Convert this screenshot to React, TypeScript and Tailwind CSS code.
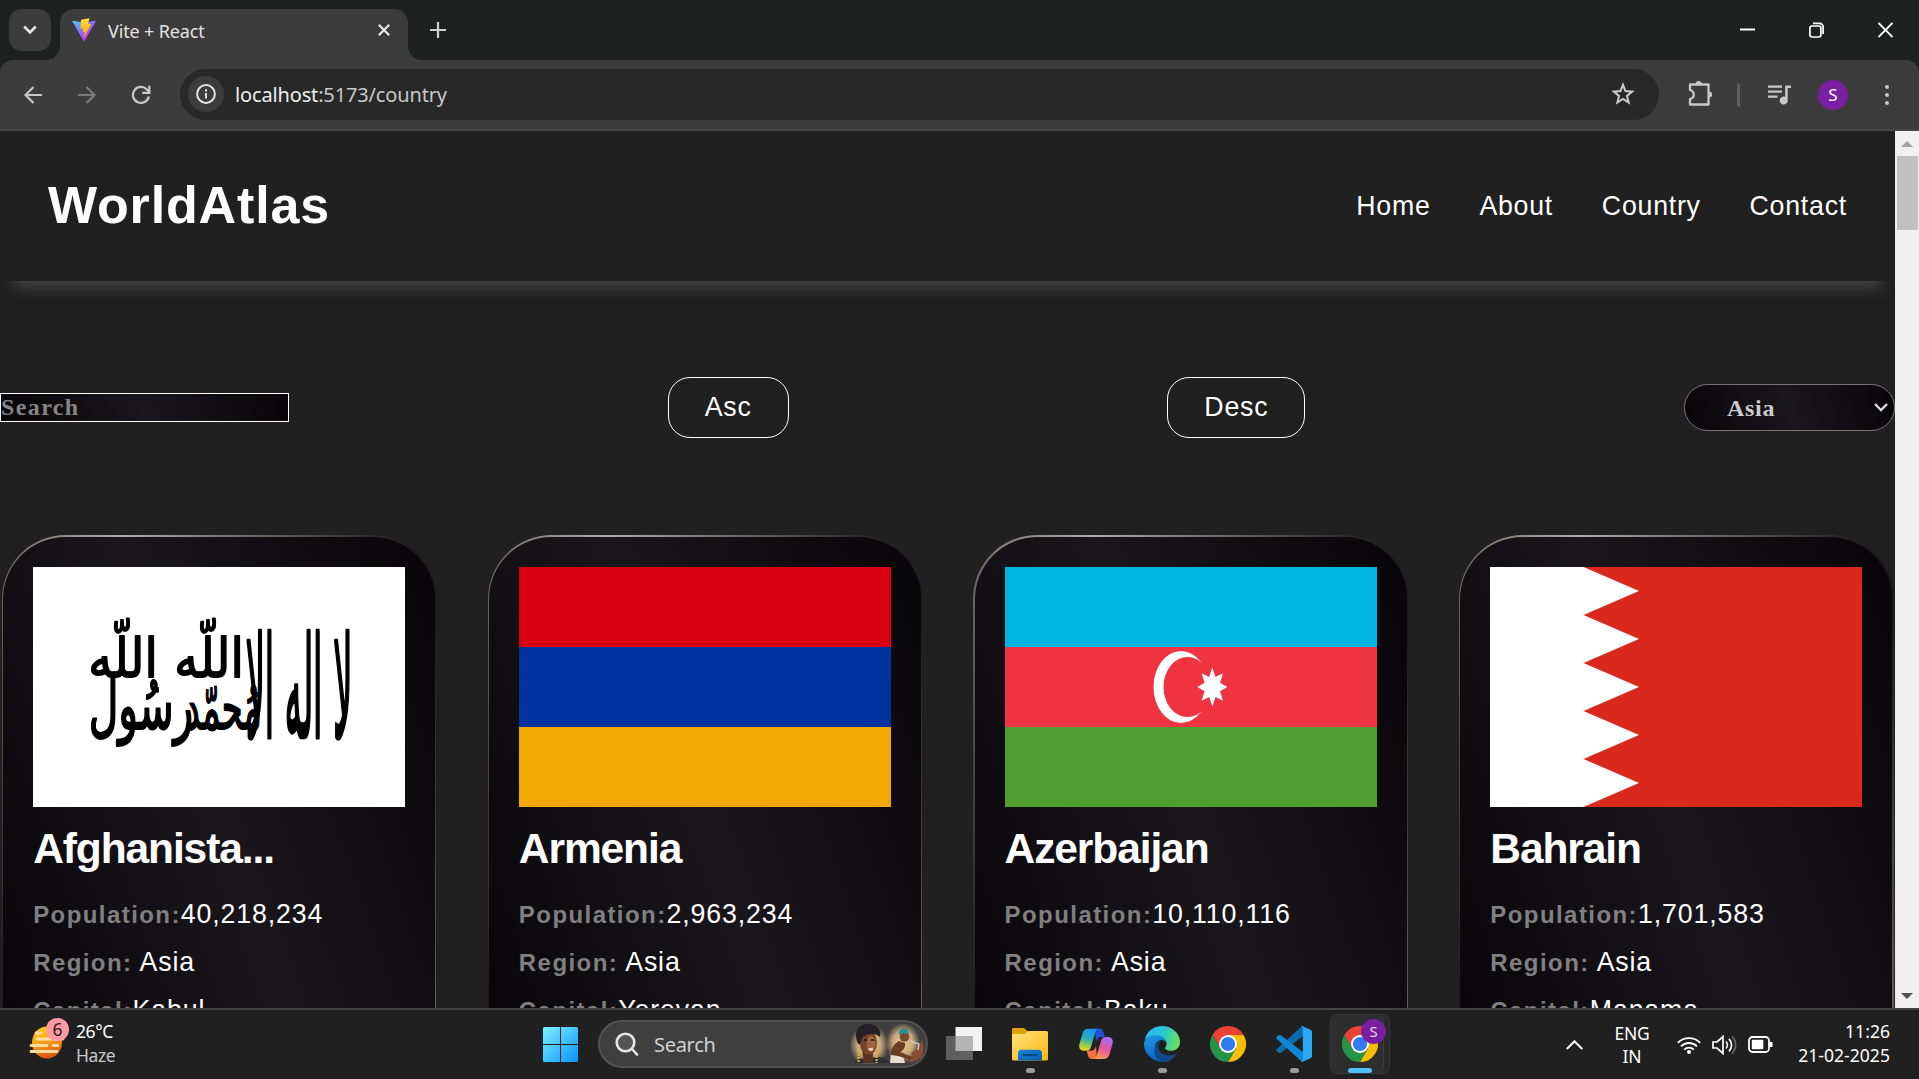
import React from 'react';

const ui = "font-['Noto_Sans','Open_Sans',sans-serif]";

/* ---------- Browser chrome ---------- */

function ViteLogo() {
  return (
    <svg viewBox="0 0 410 404" className="h-6 w-6">
      <defs>
        <linearGradient id="vite-a" x1="6" y1="33" x2="235" y2="344" gradientUnits="userSpaceOnUse">
          <stop stopColor="#41D1FF" />
          <stop offset="1" stopColor="#BD34FE" />
        </linearGradient>
        <linearGradient id="vite-b" x1="194" y1="8" x2="236" y2="292" gradientUnits="userSpaceOnUse">
          <stop stopColor="#FFEA83" />
          <stop offset=".083" stopColor="#FFDD35" />
          <stop offset="1" stopColor="#FFA800" />
        </linearGradient>
      </defs>
      <path fill="url(#vite-a)" d="M399.6 59.5 215.6 388.5c-3.8 6.8-13.5 6.8-17.4.1L10.6 59.6C6.400 52.200 12.800 43.300 21.100 44.800l184.200 32.900c1.200.2 2.400.2 3.500 0l180.300-32.900c8.300-1.500 14.700 7.300 10.500 14.700Z" />
      <path fill="url(#vite-b)" d="M293 1.600 156.800 28.300c-2.200.4-3.900 2.300-4 4.600l-8.400 141.400c-.2 3.300 2.900 5.900 6.100 5.200l37.900-8.800c3.500-.8 6.700 2.300 6 5.900l-11.300 55.200c-.8 3.700 2.700 6.900 6.300 5.800l23.400-7.100c3.600-1.100 7.100 2.100 6.300 5.800l-17.900 86.600c-1.100 5.400 6.100 8.400 9.100 3.700l2-3.100 110.900-221.400c1.900-3.700-1.300-7.900-5.400-7.100l-39 7.500c-3.700.7-6.800-2.700-5.700-6.300L298.700 7.900c1-3.600-2.100-7.100-5.700-6.300Z" />
    </svg>
  );
}

function TabStrip() {
  return (
    <div className="flex h-[60px] items-end bg-[#1f2120]">
      <div className="mb-[9px] ml-[9px] flex h-[42px] w-[42px] items-center justify-center rounded-[13px] bg-[#3c3c3c]">
        <svg viewBox="0 0 14 10" className="h-[10px] w-[14px]" fill="none" stroke="#e3e3e3" strokeWidth="2.6">
          <path d="M1.200 1.500 7 7.300l5.800-5.800" />
        </svg>
      </div>
      <div className="relative ml-[9px] flex h-[51px] w-[348px] items-center rounded-t-[14px] bg-[#3c3c3c] pl-3 pb-[9px]">
        <svg className="absolute bottom-0 -left-[14px] h-[14px] w-[14px]" viewBox="0 0 14 14">
          <path d="M14 0v14H0A14 14 0 0 0 14 0Z" fill="#3c3c3c" />
        </svg>
        <svg className="absolute bottom-0 -right-[14px] h-[14px] w-[14px]" viewBox="0 0 14 14">
          <path d="M0 0v14h14A14 14 0 0 1 0 0Z" fill="#3c3c3c" />
        </svg>
        <ViteLogo />
        <span className="ml-3 mt-px w-[270px] text-[18px] leading-6 tracking-[-0.150px] text-[#e3e3e3]">Vite + React</span>
        <svg viewBox="0 0 12 12" className="h-3 w-3" stroke="#e8e8e8" strokeWidth="2.200">
          <path d="m.8.8 10.400 10.400M11.200.8.8 11.200" />
        </svg>
      </div>
      <svg viewBox="0 0 16 16" className="mb-[22px] ml-[22px] h-4 w-4" stroke="#d0d0d0" strokeWidth="2.200">
        <path d="M8 0v16M0 8h16" />
      </svg>
      <div className="mb-[22px] ml-auto mr-[26px] flex items-center gap-[54px]">
        <svg viewBox="0 0 15 16" className="h-4 w-[15px]" stroke="#fff" strokeWidth="2">
          <path d="M0 7.500h15" />
        </svg>
        <svg viewBox="0 0 15 16" className="h-4 w-[15px]" fill="none" stroke="#fff" strokeWidth="1.700">
          <rect x=".9" y="4" width="11" height="11" rx="2.200" />
          <path d="M4 1.300h6.500a3.600 3.600 0 0 1 3.600 3.600V12" />
        </svg>
        <svg viewBox="0 0 15 16" className="h-4 w-[15px]" stroke="#fff" strokeWidth="1.800">
          <path d="m.5 1 14 14M14.500 1l-14 14" />
        </svg>
      </div>
    </div>
  );
}

function Toolbar() {
  return (
    <div className="bg-[#1f2120]">
      <div className="flex h-[71px] items-center rounded-t-[13px] border-b-2 border-[#474747] bg-[#3c3c3c] pl-6">
        <svg viewBox="0 0 18 18" className="h-[18px] w-[18px]" fill="none" stroke="#c7c7c7" strokeWidth="2.200">
          <path d="M18 9H2M9.500 1 1.500 9l8 8" />
        </svg>
        <svg viewBox="0 0 18 18" className="ml-9 h-[18px] w-[18px]" fill="none" stroke="#7c7c7c" strokeWidth="2.200">
          <path d="M0 9h16M8.500 1l8 8-8 8" />
        </svg>
        <svg viewBox="0 0 20 20" className="ml-[35px] h-5 w-5" fill="none" stroke="#c7c7c7" strokeWidth="2.300">
          <path d="M17.800 11.500A8 8 0 1 1 15.800 4.500L18 6.800" />
          <path d="M18.300 0.800v7.100h-7.100" />
        </svg>
        <div className="-mt-px ml-[29px] flex h-[51px] w-[1479px] items-center rounded-full bg-[#282828] pl-2">
          <div className="flex h-9 w-9 items-center justify-center rounded-full bg-[#3c3c3c]">
            <svg viewBox="0 0 20 20" className="h-5 w-5" fill="none" stroke="#e3e3e3" strokeWidth="2">
              <circle cx="10" cy="10" r="8.900" />
              <path d="M10 9v5.500M10 5.200v2.200" />
            </svg>
          </div>
          <span className="ml-[11px] mt-px text-[20px] leading-7 tracking-[-0.150px] text-[#c7c7c7]">
            <span className="text-[#eeeeee]">localhost</span>:5173/country
          </span>
          <svg viewBox="0 0 24 24" className="ml-auto mr-6 h-6 w-6" fill="none" stroke="#c7c7c7" strokeWidth="2.100">
            <path d="m12 2.900 2.500 6.200 6.600.5-5.100 4.300 1.600 6.500L12 16.900l-5.600 3.500L8 13.900 2.900 9.600l6.600-.5Z" />
          </svg>
        </div>
        <svg viewBox="0 0 26 26" className="ml-[28px] -mt-1 h-[26px] w-[26px]" fill="none" stroke="#c7c7c7" strokeWidth="2.300" strokeLinejoin="round">
          <path d="M3 4.500h18.500V24.500H3v-5.500c5-1.200 5-7.800 0-9Z" />
          <path d="M8.800 4.200a2.900 3.200 0 0 1 5.800 0ZM22 11.500a3.200 2.900 0 0 1 0 5.800Z" fill="#c7c7c7" stroke="none" />
        </svg>
        <div className="ml-6 h-6 w-[3px] rounded bg-[#5f5f5f]" />
        <svg viewBox="0 0 24 20" className="ml-[28px] h-5 w-6" fill="#c7c7c7">
          <path d="M0 .5h14v2.300H0zM0 5.500h14v2.300H0zM0 10.500h9.500v2.300H0zM17.200.5H23v2.600h-3.300v12.400a4 4 0 1 1-2.500-3.700Z" />
        </svg>
        <div className="ml-[26px] flex h-[30px] w-[30px] items-center justify-center rounded-full bg-[#7b1fa2] text-[17px] leading-none text-white">S</div>
        <div className="ml-[37px] flex flex-col gap-1">
          <div className="h-1 w-1 rounded-full bg-[#c7c7c7]" />
          <div className="h-1 w-1 rounded-full bg-[#c7c7c7]" />
          <div className="h-1 w-1 rounded-full bg-[#c7c7c7]" />
        </div>
      </div>
    </div>
  );
}

function Scrollbar() {
  return (
    <div className="flex w-6 shrink-0 flex-col items-center bg-[#f0f0f0]">
      <svg viewBox="0 0 12 6" className="mt-[10px] h-[6px] w-3" fill="#a3a3a3">
        <path d="m6 0 6 6H0Z" />
      </svg>
      <div className="mt-[9px] h-[74px] w-[21px] bg-[#c1c1c1]" />
      <svg viewBox="0 0 12 6" className="mb-[9px] mt-auto h-[6px] w-3" fill="#505050">
        <path d="M0 0h12L6 6Z" />
      </svg>
    </div>
  );
}

/* ---------- Flags ---------- */

function AfghanistanFlag() {
  return (
    <svg viewBox="0 0 372 240" className="h-[240px] w-[372px] bg-white" direction="rtl" fontFamily="'DejaVu Sans', sans-serif" fill="#000">
      <g fontSize="40" textAnchor="middle" stroke="#000" strokeWidth="1.300" strokeLinejoin="round">
        <text transform="translate(266 170) scale(.84 3.500)">لا اله الا</text>
        <text transform="translate(176 110) scale(1.200 1.350)">اللّه</text>
        <text transform="translate(90 110) scale(1.200 1.350)">اللّه</text>
        <text transform="translate(190 162) scale(.84 1.550)">مُحمّد</text>
        <text transform="translate(108 162) scale(1.020 1.700)">رسُول</text>
      </g>
    </svg>
  );
}

function ArmeniaFlag() {
  return (
    <div className="grid h-[240px] w-[372px] grid-rows-3">
      <div className="bg-[#d90012]" />
      <div className="bg-[#0033a0]" />
      <div className="bg-[#f2a800]" />
    </div>
  );
}

function AzerbaijanFlag() {
  const star = Array.from({ length: 16 }, (_, i) => {
    const r = i % 2 === 0 ? 1 : 0.56;
    const a = (i * Math.PI) / 8;
    return `${207.300 + 15 * r * Math.sin(a)},${120 - 19.500 * r * Math.cos(a)}`;
  }).join(' ');
  return (
    <svg viewBox="0 0 372 240" preserveAspectRatio="none" className="h-[240px] w-[372px]">
      <path fill="#00b5e2" d="M0 0h372v80H0z" />
      <path fill="#ef3340" d="M0 80h372v80H0z" />
      <path fill="#509e2f" d="M0 160h372v80H0z" />
      <ellipse cx="176" cy="120" rx="27.500" ry="36" fill="#fff" />
      <ellipse cx="182.500" cy="120" rx="24" ry="30" fill="#ef3340" />
      <polygon points={star} fill="#fff" />
    </svg>
  );
}

function BahrainFlag() {
  return (
    <svg viewBox="0 0 372 240" className="h-[240px] w-[372px]">
      <path fill="#da291c" d="M0 0h372v240H0z" />
      <path fill="#fff" d="M0 0h93.500l55.500 24-55.500 24 55.500 24-55.500 24 55.500 24-55.500 24 55.500 24-55.500 24 55.500 24-55.500 24H0z" />
    </svg>
  );
}

/* ---------- Page ---------- */

const countries = [
  { name: 'Afghanista...', population: '40,218,234', capital: 'Kabul', Flag: AfghanistanFlag },
  { name: 'Armenia', population: '2,963,234', capital: 'Yerevan', Flag: ArmeniaFlag },
  { name: 'Azerbaijan', population: '10,110,116', capital: 'Baku', Flag: AzerbaijanFlag },
  { name: 'Bahrain', population: '1,701,583', capital: 'Manama', Flag: BahrainFlag },
];

function Label({ children }: { children: React.ReactNode }) {
  return <span className="text-[24px] font-bold tracking-[1.430px] text-[#808080]">{children}</span>;
}

function Card({ name, population, capital, Flag }: (typeof countries)[number]) {
  return (
    <li className="h-[562px] rounded-[64px] bg-[linear-gradient(71deg,#0c0d0d,#b0aca5,#0c0d0d)] px-[1.250px] py-[2px]">
      <div className="h-full rounded-[62.500px] bg-[linear-gradient(71deg,#080509,#1a171c,#080509)] px-[30px] pt-[30px]">
        <Flag />
        <h2 className="mt-[18px] whitespace-nowrap text-[42.500px] font-bold leading-[48px] tracking-[-1.100px] text-white">{name}</h2>
        <div className="mt-[17px] whitespace-nowrap text-[26.750px] leading-[48px] tracking-[0.850px] text-white">
          <p className="h-12"><Label>Population:</Label>{population}</p>
          <p className="h-12"><Label>Region:</Label><span className="ml-[7px]">Asia</span></p>
          <p className="h-12"><Label>Capital:</Label>{capital}</p>
        </div>
      </div>
    </li>
  );
}

function Page() {
  return (
    <div className="flex h-[877px] overflow-hidden">
      <main className="flex-1 overflow-hidden bg-[#202020] font-['Liberation_Sans',Arial,sans-serif]">
        <header className="flex h-[150px] items-center justify-between bg-[#202020] px-12 shadow-[0_20px_14px_-14px_#474747]">
          <h1 className="-mt-[3px] text-[52px] font-bold leading-[60px] tracking-[0.850px] text-white">WorldAtlas</h1>
          <nav className="flex gap-[48.800px] text-[26.750px] tracking-[0.750px] text-white">
            <a>Home</a>
            <a>About</a>
            <a>Country</a>
            <a>Contact</a>
          </nav>
        </header>
        <section className="mt-24 flex h-[61px] items-center justify-between">
          <div className="h-[29px] w-[289px] border border-white bg-[linear-gradient(71deg,#080509,#1a171c,#080509)] font-['Liberation_Serif',serif] text-[24px] font-bold leading-[27px] tracking-[1.400px] text-[#858585]">Search</div>
          <button className="h-[61px] w-[121px] rounded-[22px] border border-white text-[26.750px] tracking-[0.750px] text-white">Asc</button>
          <button className="h-[61px] w-[138px] rounded-[22px] border border-white text-[26.750px] tracking-[0.750px] text-white">Desc</button>
          <div className="flex h-[47px] w-[211px] items-center justify-between rounded-full border border-[#767676] bg-[linear-gradient(71deg,#080509,#1a171c,#080509)] pl-[42px] pr-[6px] font-['Liberation_Serif',serif] text-[24px] font-bold tracking-[0.700px] text-[#cccccc]">
            Asia
            <svg viewBox="0 0 14 9" className="h-[9px] w-[14px]" fill="none" stroke="#e0e0e0" strokeWidth="2.300">
              <path d="m1 1 6 6 6-6" />
            </svg>
          </div>
        </section>
        <ul className="mt-[97px] grid grid-cols-4 gap-[51.300px] pl-[1.900px] pr-[1.500px]">
          {countries.map((c) => <Card key={c.name} {...c} />)}
        </ul>
      </main>
      <Scrollbar />
    </div>
  );
}

/* ---------- Taskbar ---------- */

function WeatherIcon() {
  return (
    <svg viewBox="0 0 44 42" className="h-[42px] w-11">
      <defs>
        <linearGradient id="sun" x1="0" y1="0" x2=".3" y2="1">
          <stop stopColor="#ffd21c" />
          <stop offset=".5" stopColor="#fba71b" />
          <stop offset="1" stopColor="#e05a10" />
        </linearGradient>
      </defs>
      <ellipse cx="19" cy="24.500" rx="15" ry="16" fill="url(#sun)" />
      <g stroke="#f8dfa0" strokeWidth="2.800" strokeLinecap="round">
        <path d="M8 15h5M9 21h18M32 21h3M3 27.500h16M25 27.500h5M3 33.500h26" />
      </g>
      <circle cx="29.500" cy="11.500" r="11.500" fill="#ff99a4" />
      <text x="29.500" y="17.500" textAnchor="middle" fontSize="17.500" fill="#1a1a1a">6</text>
    </svg>
  );
}

function ChromeIcon() {
  return (
    <svg viewBox="0 0 36 36" className="h-9 w-9">
      <path fill="#fbbc05" d="M18 9h15.600A18 18 0 0 1 18 36l7.800-13.500Z" />
      <path fill="#ea4335" d="M2.400 9 10.200 22.500 18 9h15.600A18 18 0 0 0 2.400 9Z" />
      <path fill="#249447" d="M2.400 9A18 18 0 0 0 18 36l7.800-13.500-7.800 4-7.800-4Z" />
      <circle cx="18" cy="18" r="9" fill="#fff" />
      <circle cx="18" cy="18" r="7.100" fill="#2f7cf0" />
    </svg>
  );
}

function EdgeIcon() {
  return (
    <svg viewBox="0 0 36 36" className="h-9 w-9">
      <defs>
        <linearGradient id="edge-a" x1="0" y1=".3" x2="1" y2=".5">
          <stop stopColor="#30b4f4" />
          <stop offset=".5" stopColor="#27c6d4" />
          <stop offset="1" stopColor="#6be35a" />
        </linearGradient>
        <linearGradient id="edge-b" x1="0" y1="0" x2=".4" y2="1">
          <stop stopColor="#1e9de8" />
          <stop offset="1" stopColor="#0a62c0" />
        </linearGradient>
      </defs>
      <path fill="url(#edge-a)" d="M.6 14C2.500 5.500 9.500 0 18 0c10.500 0 18 7.800 18 16 0 5.400-4 8.800-9 8.800-4.200 0-6-1.600-6-2.700 0-1 1.600-1.600 1.600-4.200 0-4.500-5-8-10.600-8C7 9.900 2.500 12 .6 14Z" />
      <path fill="url(#edge-b)" d="M0 18c0-4.800 5-8.800 11-8.800 6.400 0 11.400 3.800 11.600 8.200-1-2.200-3-3.300-5-3.300-4 0-6.800 4-6.800 8.400 0 6.500 4.700 11.700 10.700 13.200C10 37 0 28.500 0 18Z" />
      <path fill="#114a8b" d="M14.200 19.500c-.6 5.500 4.300 9.800 10.400 9.800 3.500 0 6-1 8.300-2.400C30 32.500 25 36 19 36 13 35 9.500 29 10.800 22.500c.5-3.500 3-7 6.500-8.200-1.600 1-2.900 3-3.100 5.200Z" />
    </svg>
  );
}

function VSCodeIcon() {
  return (
    <svg viewBox="0 0 36 36" className="h-9 w-9">
      <path fill="#0b6cb0" d="M.8 25.200a1.500 1.500 0 0 1 0-2.200L25.600.5c.5-.4.8-.5 1.400-.3v9.700L4.800 26.700a1.600 1.600 0 0 1-2 0Z" />
      <path fill="#0f86d2" d="M.8 10.800a1.500 1.500 0 0 0 0 2.200l24.800 22.500c.5.4.8.5 1.400.3v-9.700L4.800 9.300a1.600 1.600 0 0 0-2 0Z" />
      <path fill="#2aa8f4" d="M26.800.2 34.800 4c.8.4 1.200 1 1.200 1.900v24.200c0 .9-.4 1.500-1.200 1.900l-8 3.800c-.9.4-1.500.2-2.200-.5.900.6 2.200.1 2.200-1V1.700c0-1.100-1.300-1.600-2.200-1C25.300 0 25.900-.2 26.800.2Z" />
    </svg>
  );
}

function CopilotIcon() {
  return (
    <svg viewBox="0 0 34 32" className="h-8 w-[34px]">
      <defs>
        <linearGradient id="cop-a" x1=".5" y1="0" x2=".3" y2="1">
          <stop stopColor="#1597f0" />
          <stop offset=".45" stopColor="#25b0b8" />
          <stop offset=".75" stopColor="#8fcf4c" />
          <stop offset="1" stopColor="#f3d21b" />
        </linearGradient>
        <linearGradient id="cop-b" x1=".7" y1="0" x2=".3" y2="1">
          <stop stopColor="#a06cf5" />
          <stop offset=".5" stopColor="#e3559f" />
          <stop offset="1" stopColor="#ff9a55" />
        </linearGradient>
      </defs>
      <path fill="#1c52d4" d="M16 .8h4.500c2.500 0 3.500 1.500 4.200 4l1.200 4.200H22c-3 0-4 2-5 5Z" />
      <path fill="#f5703f" d="M18 31h-5c-2.500 0-3.600-1.500-4.200-4l-1-4.200H12c3 0 4-2 5-5Z" />
      <path fill="url(#cop-a)" d="M9.500.8H20c-2 0-3 1.200-3.700 3.500L12 18.800c-.9 3-2 4-4.500 4H5c-4 0-5.600-2.800-4.500-7L3.500 5.500C4.400 2.300 6 .8 9.500.8Z" />
      <path fill="url(#cop-b)" d="M24.500 31H14c2 0 3-1.200 3.700-3.500L22 13c.9-3 2-4 4.500-4H29c4 0 5.600 2.800 4.500 7l-3 10.300c-.9 3.200-2.500 4.700-6 4.700Z" />
    </svg>
  );
}

function FolderIcon() {
  return (
    <svg viewBox="0 0 36 36" className="h-9 w-9">
      <defs>
        <linearGradient id="fold" x1="0" y1="0" x2="1" y2="1">
          <stop stopColor="#ffe07a" />
          <stop offset="1" stopColor="#fbb914" />
        </linearGradient>
        <linearGradient id="fold-blue" x1="0" y1="0" x2="1" y2="1">
          <stop stopColor="#1483d8" />
          <stop offset="1" stopColor="#0c5fae" />
        </linearGradient>
      </defs>
      <path fill="#e0a100" d="M0 3.500C0 2.600.6 2 1.500 2H11c.8 0 1.300.3 1.900.8L16 5.500V10H0Z" />
      <path fill="url(#fold)" d="M0 8h11.500c.8 0 1.300-.2 1.900-.7l1.700-1.500c.5-.5 1-.7 1.800-.7h17.600c.9 0 1.500.6 1.500 1.500V33c0 .9-.6 1.500-1.500 1.500h-33C.6 34.500 0 33.900 0 33Z" />
      <path fill="url(#fold-blue)" d="M6 34.500V27c0-2 1.300-3.300 3.300-3.300h17.400c2 0 3.300 1.300 3.300 3.300v7.500Z" />
      <path stroke="#0a4a86" strokeWidth="1.800" strokeLinecap="round" d="M11.500 29h13" />
    </svg>
  );
}

function SearchArt() {
  return (
    <svg viewBox="0 0 76 40" className="h-10 w-[76px]">
      <defs>
        <radialGradient id="glow">
          <stop stopColor="#f2cf96" />
          <stop offset=".6" stopColor="#c9a878" />
          <stop offset="1" stopColor="#c9a878" stopOpacity="0" />
        </radialGradient>
      </defs>
      <ellipse cx="20" cy="21" rx="19.500" ry="21" fill="url(#glow)" />
      <ellipse cx="54" cy="19" rx="17" ry="20" fill="url(#glow)" />
      <path fill="#2c2e38" d="M5 39c2-5 8-4 13-5l10-1c5 0 9 1 13 6Z" />
      <path fill="#5a3221" d="M13 26h11v13H15Z" />
      <ellipse cx="19.500" cy="19" rx="8.500" ry="12" fill="#74432b" />
      <ellipse cx="22" cy="20" rx="4.500" ry="8" fill="#a3653f" />
      <path fill="#262126" d="M7.500 15C5 5 11 0 19 0s14 5 12 13c-4-4-13-4-18 1l-2 7c-2-1-3.500-3-3.500-6Z" />
      <path d="M15 16h3.500M22 16h3.500" stroke="#1f1412" strokeWidth="1.400" />
      <path d="M19 25c2-1.500 4-1.500 5.500 0-1 2-4.500 2-5.500 0Z" fill="#f1dcd4" />
      <path d="M9.500 27v12M27.500 26v13" stroke="#d7ae2e" strokeWidth="2.200" strokeDasharray="2 1" />
      <path fill="#e8ddcd" d="M42 27c5-2 9 0 12 5l2 7H41Z" />
      <path fill="#6b3d26" d="M42 31c-1-6 3-11 8-14l6 2c1 4-2 8-5 9l12 5-1 3-13-4Z" />
      <circle cx="55.500" cy="13" r="4.800" fill="#7d4a2f" />
      <path fill="#1f8f9c" d="M50 10c0-5 4-6 8-5l2 5c-4-1.500-7-1-9 1Z" />
      <path fill="#8a4f32" d="M62 29 69 24l4-8 2 7-2 10-9 5h-5l5-6Z" />
      <path d="m61 17 9 3-1 6" stroke="#c8cbd0" strokeWidth="1.400" fill="none" />
    </svg>
  );
}

function TaskItem({ children, dot = false }: { children: React.ReactNode; dot?: boolean }) {
  return (
    <div className="relative flex h-[71px] w-[66px] items-center justify-center pb-px">
      {children}
      {dot && <div className="absolute bottom-[7px] h-[5px] w-[9px] rounded-full bg-[#9a9a9a]" />}
    </div>
  );
}

function Taskbar() {
  return (
    <footer className="flex h-[71px] items-center border-t-2 border-[#444444] bg-[#202020]">
      <div className="flex w-[543px] items-center pl-[28px]">
        <div className="-mt-[12px]"><WeatherIcon /></div>
        <div className="-mt-[3px] ml-1 text-[17.500px] leading-6 tracking-[-0.4px]">
          <div className="text-white">26°C</div>
          <div className="text-[#c8c8c8]">Haze</div>
        </div>
      </div>
      <svg viewBox="0 0 35 35" className="h-[35px] w-[35px]">
        <defs>
          <linearGradient id="win" x1="0" y1="0" x2="35" y2="35" gradientUnits="userSpaceOnUse">
            <stop stopColor="#7df0ff" />
            <stop offset="1" stopColor="#0a94fb" />
          </linearGradient>
        </defs>
        <path fill="url(#win)" d="M1.500 0H17v17H0V1.500Q0 0 1.500 0ZM18 0h15.500Q35 0 35 1.500V17H18ZM0 18h17v17H1.500Q0 35 0 33.500ZM18 18h17v15.500Q35 35 33.500 35H18Z" />
      </svg>
      <div className="-mt-px ml-5 flex h-12 w-[330px] items-center rounded-full border-2 border-[#525252] bg-[#3f3f3f] pl-[15px] pr-px">
        <svg viewBox="0 0 24 24" className="h-6 w-6" fill="none" stroke="#e4e4e4" strokeWidth="2.600" strokeLinecap="round">
          <circle cx="10.500" cy="10.500" r="8.800" fill="#555" />
          <path d="m17 17 5 5.500" />
        </svg>
        <span className="ml-[15px] mt-px text-[20px] leading-7 tracking-[-0.3px] text-[#d0d0d0]">Search</span>
        <div className="ml-auto"><SearchArt /></div>
      </div>
      <div className="flex pl-[3px]">
        <TaskItem>
          <svg viewBox="0 0 36 36" className="h-9 w-9">
            <path fill="#f2f2f2" d="M9.500 1H36v24H9.500z" />
            <path fill="#5f5f5f" d="M0 10h27v24H0z" />
            <path fill="#b5b5b5" d="M9.500 10H27v15H9.500z" />
          </svg>
        </TaskItem>
        <TaskItem dot><FolderIcon /></TaskItem>
        <TaskItem><CopilotIcon /></TaskItem>
        <TaskItem dot><EdgeIcon /></TaskItem>
        <TaskItem><ChromeIcon /></TaskItem>
        <TaskItem dot><VSCodeIcon /></TaskItem>
      </div>
      <div className="-mt-px ml-[3px] flex h-[60px] w-[60px] rounded-[7px] border border-[#383838] bg-[#292929]">
        <div className="relative flex h-full w-[53px] shrink-0 items-center justify-center rounded-[7px] border-r border-[#3c3c3c] bg-[#2e2e2e] pl-[5px]">
          <ChromeIcon />
          <div className="absolute -right-[3px] top-1 flex h-[25px] w-[25px] items-center justify-center rounded-full bg-[#7b1fa2] text-[15px] leading-none text-[#e6d3ee]">S</div>
          <div className="absolute bottom-0 left-[17px] h-[5px] w-6 rounded-full bg-[#4cc2ff]" />
        </div>
      </div>
      <div className="ml-auto flex items-center pr-[29px] text-[17.500px] leading-6 text-white">
        <svg viewBox="0 0 17 10" className="h-[10px] w-[17px]" fill="none" stroke="#fff" strokeWidth="2">
          <path d="m.8 9 7.700-7.700L16.200 9" />
        </svg>
        <div className="ml-[31px] w-9 text-center tracking-[-0.2px]">
          <div>ENG</div>
          <div className="-mt-px">IN</div>
        </div>
        <svg viewBox="0 0 24 18" className="ml-[27px] h-[18px] w-6" fill="none" stroke="#fff" strokeWidth="1.800">
          <path d="M.8 6.800a15.800 15.800 0 0 1 22.400 0M4 10.300a11.300 11.300 0 0 1 16 0M7.200 13.600a6.800 6.800 0 0 1 9.600 0" />
          <circle cx="12" cy="16" r="2" fill="#fff" stroke="none" />
        </svg>
        <svg viewBox="0 0 25 20" className="ml-[11px] h-5 w-[25px]" fill="none" stroke="#fff" strokeWidth="1.700">
          <path d="M1 7h4l6-5.500v17L5 13H1ZM14 6.500c1.800 2 1.800 5 0 7M17 3.800c3.400 3.500 3.400 9 0 12.500" />
          <path stroke="#666" d="M20 1.300c4.800 5 4.800 12.400 0 17.400" />
        </svg>
        <svg viewBox="0 0 25 17" className="ml-[11px] h-[17px] w-[25px]" fill="none" stroke="#fff" strokeWidth="1.800">
          <rect x="1" y="1" width="20" height="15" rx="3.500" />
          <rect x="3.800" y="3.800" width="11.500" height="9.400" rx="1" fill="#fff" stroke="none" />
          <path d="M23 6v5" strokeWidth="3" />
        </svg>
        <div className="-mt-[3px] ml-6 w-[93px] whitespace-nowrap text-right tracking-[0.050px]">
          <div>11:26</div>
          <div>21-02-2025</div>
        </div>
      </div>
    </footer>
  );
}

export default function App() {
  return (
    <div className={`h-[1079px] w-[1919px] overflow-hidden bg-[#202020] ${ui}`}>
      <TabStrip />
      <Toolbar />
      <Page />
      <Taskbar />
    </div>
  );
}
